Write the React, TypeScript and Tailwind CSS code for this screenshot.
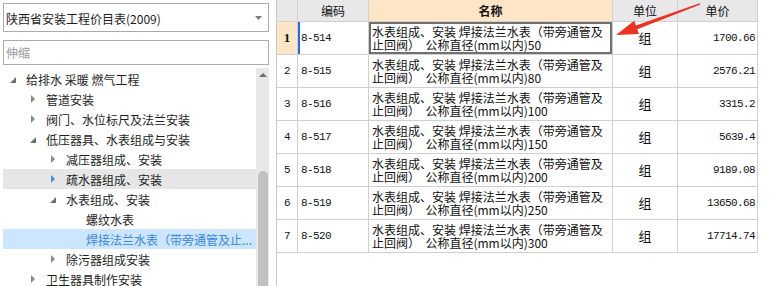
import React from "react";

type TreeNode = {
  level: number;
  label: string;
  icon?: "open" | "closed";
  hover?: boolean;
  selected?: boolean;
};

const tree: TreeNode[] = [
  { level: 0, label: "给排水 采暖 燃气工程", icon: "open" },
  { level: 1, label: "管道安装", icon: "closed" },
  { level: 1, label: "阀门、水位标尺及法兰安装", icon: "closed" },
  { level: 1, label: "低压器具、水表组成与安装", icon: "open" },
  { level: 2, label: "减压器组成、安装", icon: "closed" },
  { level: 2, label: "疏水器组成、安装", icon: "closed", hover: true },
  { level: 2, label: "水表组成、安装", icon: "open" },
  { level: 3, label: "螺纹水表" },
  { level: 3, label: "焊接法兰水表（带旁通管及止...", selected: true },
  { level: 2, label: "除污器组成安装", icon: "closed" },
  { level: 1, label: "卫生器具制作安装", icon: "closed" },
];

const rows = [
  { code: "8-514", size: "50", price: "1700.66" },
  { code: "8-515", size: "80", price: "2576.21" },
  { code: "8-516", size: "100", price: "3315.2" },
  { code: "8-517", size: "150", price: "5639.4" },
  { code: "8-518", size: "200", price: "9189.08" },
  { code: "8-519", size: "250", price: "13650.68" },
  { code: "8-520", size: "300", price: "17714.74" },
];

const cjk = "font-['Microsoft_YaHei','Noto_Sans_CJK_SC',sans-serif]";
const mono = "font-['Liberation_Mono',monospace] text-[11px] tracking-[-0.6px]";

function Caret({ kind, active }: { kind?: "open" | "closed"; active?: boolean }) {
  if (kind === "open") {
    return (
      <svg width="16" height="20" viewBox="0 0 16 20">
        <polygon points="6,8 6,14 0,14" fill="#6f6f6f" />
      </svg>
    );
  }
  if (kind === "closed") {
    return (
      <svg width="16" height="20" viewBox="0 0 16 20">
        <polygon points="1,6 5,10 1,14" fill={active ? "#3d8ee6" : "#8a8a8a"} />
      </svg>
    );
  }
  return <span className="w-4" />;
}

function CatalogPanel() {
  return (
    <div className={`flex h-full w-[270px] shrink-0 flex-col pl-[3px] ${cjk} text-[12px] text-[#1e1e1e]`}>
      <div className="mt-[3px] flex h-[29px] w-[266px] items-center justify-between border border-[#ababab] pl-[2px] pr-[6px]">
        <span className="pt-[3px]">陕西省安装工程价目表(2009)</span>
        <svg width="7" height="4" viewBox="0 0 7 4">
          <polygon points="0,0 7,0 3.5,4" fill="#7a7a7a" />
        </svg>
      </div>
      <div className="mt-[8px] flex h-[25px] w-[266px] items-center border border-[#ababab] pl-[2px] text-[#9a9a9a]">
        伸缩
      </div>
      <div className="mt-[3px] flex min-h-0 w-[266px] flex-1">
        <div className="flex-1 pt-[1px]">
          {tree.map((n) => (
            <div
              key={n.label}
              className={`flex h-5 items-center whitespace-nowrap ${
                n.selected ? "bg-[#cce6ff] text-[#3a86dc]" : n.hover ? "bg-[#e6e6e6]" : ""
              }`}
              style={{ paddingLeft: 7 + n.level * 20 }}
            >
              <Caret kind={n.icon} active={n.hover} />
              <span className="pt-[1px]">{n.label}</span>
            </div>
          ))}
        </div>
        <div className="flex w-[13px] flex-col items-center bg-[#e8e8e8]">
          <svg className="mt-[5px]" width="8" height="4" viewBox="0 0 8 4">
            <polygon points="4,0 8,4 0,4" fill="#6a6a6a" />
          </svg>
          <div className="mt-[94px] w-[10px] flex-1 rounded-t-[5px] bg-[#c1c1c1]" />
        </div>
      </div>
    </div>
  );
}

function PriceTable() {
  const line = "border-b border-r border-[#d0d0d0]";
  return (
    <div className={`ml-[6px] h-full flex-1 border-l border-[#c9c9c9] ${cjk} text-[12px] text-[#111]`}>
      <div className="flex h-[22px]">
        <div className={`w-[21px] bg-[#e8e8e8] ${line}`} />
        <div className={`flex w-[71px] items-center justify-center bg-[#e8e8e8] ${line}`}>编码</div>
        <div className={`flex w-[244px] items-center justify-center bg-[#fde5c6] font-bold ${line}`}>名称</div>
        <div className={`flex w-[65px] items-center justify-center bg-[#e8e8e8] ${line}`}>单位</div>
        <div className={`flex w-[80px] items-center justify-center bg-[#e8e8e8] ${line}`}>单价</div>
      </div>
      {rows.map((r, i) => (
        <div key={r.code} className="flex h-[33px]">
          <div
            className={`flex w-[21px] items-center justify-center ${line} ${
              i === 0 ? "bg-[#fde5c6] font-['Liberation_Serif',serif] text-[13px] font-bold" : mono
            }`}
          >
            {i + 1}
          </div>
          <div className={`relative flex w-[71px] items-center pl-[3px] ${mono} ${line}`}>
            {i === 0 && <span className="absolute bottom-0 left-0 top-0 w-[2px] bg-[#1c6cf5]" />}
            {r.code}
          </div>
          <div
            className={`flex w-[244px] items-center pl-[3px] leading-[13px] whitespace-pre ${line} ${
              i === 0 ? "border-[#d0d0d0] shadow-[inset_0_0_0_2px_#707070]" : ""
            }`}
          >
            <span>
              水表组成、安装 焊接法兰水表（带旁通管及
              <br />
              止回阀）  公称直径(mm以内){r.size}
            </span>
          </div>
          <div className={`flex w-[65px] items-center justify-center text-[13px] ${line}`}>组</div>
          <div className={`flex w-[80px] items-center justify-end pr-[2px] ${mono} ${line}`}>{r.price}</div>
        </div>
      ))}
    </div>
  );
}

export default function App() {
  return (
    <div className="relative flex h-[286px] w-[771px] overflow-hidden bg-white">
      <CatalogPanel />
      <PriceTable />
      <svg className="pointer-events-none absolute left-0 top-0" width="771" height="286">
        <polygon
          points="616,35 639,34 637.3,29.3 700.4,4.6 699.6,3.2 635.9,25.5 634.2,20.8"
          fill="#ea3323"
        />
      </svg>
    </div>
  );
}
